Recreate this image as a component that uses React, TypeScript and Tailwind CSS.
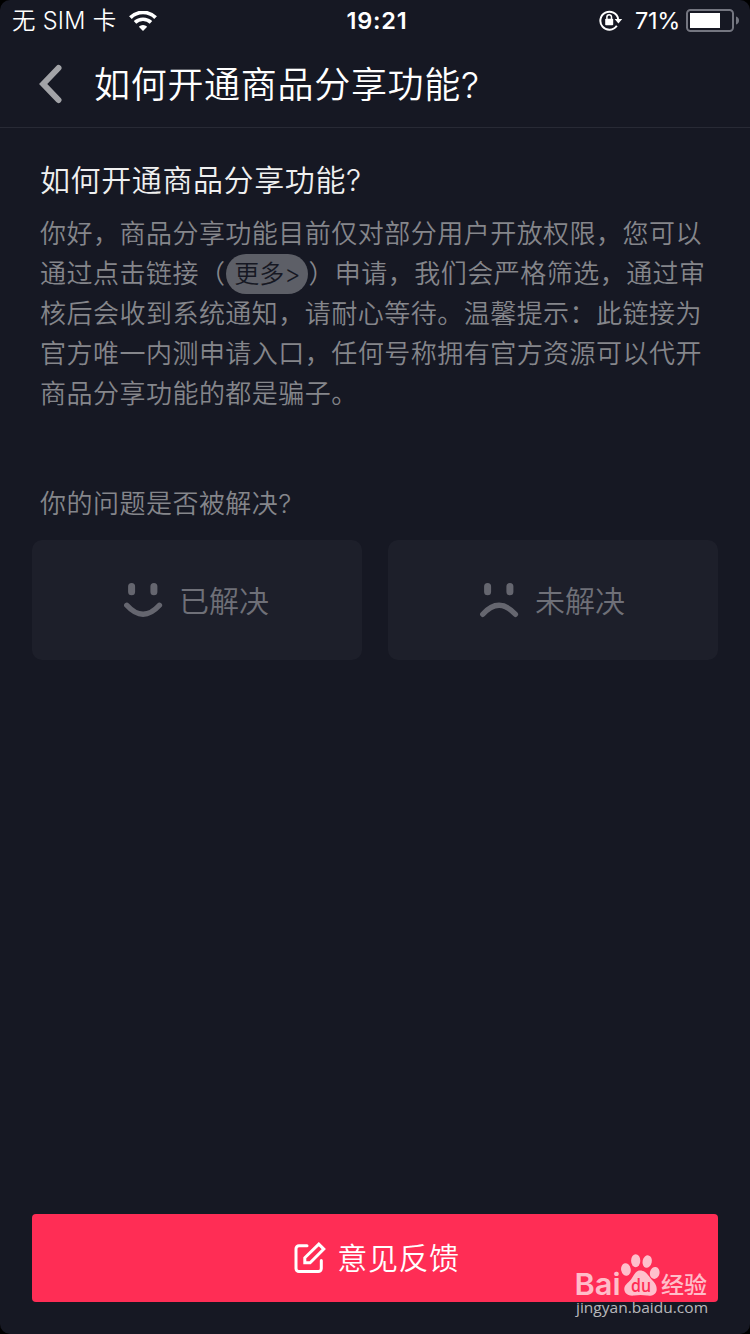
import type { ReactNode } from "react";

function WifiIcon() {
  return (
    <svg width="28" height="20" viewBox="0 0 28 20" fill="none" stroke="#fff">
      <path d="M1.4 6.6A18 18 0 0 1 26.6 6.6" strokeWidth="3.8" />
      <path d="M6 11.4A11.6 11.6 0 0 1 22 11.4" strokeWidth="3.6" />
      <path d="M14 20L9.8 15.7A6 6 0 0 1 18.2 15.7Z" fill="#fff" stroke="none" />
    </svg>
  );
}

function RotationLockIcon() {
  return (
    <svg width="24" height="22" viewBox="0 0 24 22" fill="none" stroke="#fff">
      <path d="M17.8 15.800A9 9 0 1 1 19.2 9" strokeWidth="2" />
      <path d="M15.6 9H23.2L19.4 13.6Z" fill="#fff" stroke="none" />
      <rect x="6.2" y="8.800" width="8" height="6.4" rx="0.8" fill="#fff" stroke="none" />
      <path d="M7.9 9.500V7a2.300 2.300 0 0 1 4.600 0V9.500" strokeWidth="1.500" />
    </svg>
  );
}

function BatteryIcon() {
  return (
    <svg width="54" height="24" viewBox="0 0 54 24" fill="none">
      <rect x="1" y="1" width="46" height="21" rx="3.5" stroke="#747680" strokeWidth="2" />
      <rect x="4" y="4" width="30" height="15" fill="#fff" />
      <path d="M50 7.5c1.8.6 3 2 3 4s-1.200 3.400-3 4z" fill="#747680" />
    </svg>
  );
}

function StatusBar() {
  return (
    <div className="flex h-[41px] items-center text-[23.500px] text-white">
      <div className="flex w-[250px] items-center pl-3">
        <span className="w-[117px] whitespace-nowrap font-[350] tracking-[0.3px]">无 SIM 卡</span>
        <WifiIcon />
      </div>
      <div className="flex-1 pl-1 text-center font-semibold tracking-[0.8px]">19:21</div>
      <div className="flex w-[250px] items-center justify-end pr-[10px]">
        <RotationLockIcon />
        <span className="ml-3 mr-[6px] tracking-[-0.3px]">71%</span>
        <BatteryIcon />
      </div>
    </div>
  );
}

function Face({ happy }: { happy: boolean }) {
  return (
    <svg width="40" height="36" viewBox="0 0 40 36" fill="none" stroke="#65666f" strokeLinecap="round">
      <path d="M7.600 4.500v5.300M29.900 4.500v5.300" strokeWidth="7" />
      <path
        d={happy ? "M2.800 23.300Q19 41.300 35.400 23.300" : "M2.800 32.300Q19 14.300 35.400 32.300"}
        strokeWidth="5.400"
      />
    </svg>
  );
}

function AnswerButton({ icon, label }: { icon: ReactNode; label: string }) {
  return (
    <button
      type="button"
      className="flex h-[120px] w-[330px] items-center justify-center rounded-[10px] bg-[#1d1f2a] text-[30px] font-[350] text-[#6f7078]"
    >
      {icon}
      <span className="ml-[15px] mr-px pt-0.5">{label}</span>
    </button>
  );
}

function EditIcon() {
  return (
    <svg
      width="34"
      height="32"
      viewBox="0 0 34 32"
      fill="none"
      stroke="#fff"
      strokeWidth="3"
      strokeLinecap="round"
      strokeLinejoin="round"
    >
      <path d="M14 3.800H6a3 3 0 0 0-3 3v19.700a3 3 0 0 0 3 3H25.300a3 3 0 0 0 3-3V18.500" />
      <path d="M25.800 2.100L30.800 7.100L17.100 20.800H11.800V15.800Z" strokeLinejoin="miter" />
    </svg>
  );
}

function Watermark() {
  return (
    <div className="absolute left-[574px] top-[1252px] text-white/70">
      <svg
        width="138"
        height="66"
        viewBox="0 0 138 66"
        fill="currentColor"
        className="font-['Open_Sans','Noto_Sans_CJK_SC',sans-serif]"
      >
        <text
          x="0.500"
          y="43"
          fontSize="30"
          fontWeight="600"
          textLength="46"
          lengthAdjust="spacingAndGlyphs"
          className="font-['Inter']"
        >
          Bai
        </text>
        <ellipse cx="52" cy="17.500" rx="4.800" ry="6.300" transform="rotate(-10 52 18)" />
        <ellipse cx="61.700" cy="8.700" rx="4.600" ry="6.500" />
        <ellipse cx="73.300" cy="9.500" rx="4.600" ry="6.300" transform="rotate(12 73 9)" />
        <ellipse cx="80.700" cy="21" rx="4.800" ry="6" transform="rotate(12 81 21)" />
        <path d="M66 18.500c6 0 8 5 12 9.500 3 3 5 5.500 4.700 10-.5 4.500-4.700 6.300-9.700 5.600-4-.7-9-.7-13 0-5 .7-9.200-1.600-9.700-6.100-.3-4.500 3.700-6.500 6.700-10 3-3.500 4-9 9-9z" />
        <text x="57" y="40" fontSize="18" fontWeight="600" fill="#ff2d55" textLength="20" lengthAdjust="spacingAndGlyphs">
          du
        </text>
        <text x="87" y="41" fontSize="23" fontWeight="500" textLength="46" lengthAdjust="spacingAndGlyphs">
          经验
        </text>
        <text x="2" y="61" fontSize="14.500" fontWeight="500" textLength="132" lengthAdjust="spacingAndGlyphs">
          jingyan.baidu.com
        </text>
      </svg>
    </div>
  );
}

export default function App() {
  return (
    <div className="bg-black">
      <div
        lang="zh-CN"
        className="relative flex h-[1334px] w-[750px] flex-col overflow-hidden rounded-[10px] bg-[#161823] font-['Inter','Noto_Sans_CJK_SC',sans-serif]"
      >
        <StatusBar />

        <header className="flex h-[87px] items-center border-b border-[#282a35] pl-[38px]">
          <svg width="26" height="40" viewBox="0 0 26 40" fill="none" stroke="#a2a3a7" strokeWidth="6" strokeLinecap="round">
            <path d="M20.500 4L5.200 20L20.500 36" />
          </svg>
          <h1 className="ml-[30px] pt-0.5 text-[36px] font-[350] leading-[54px] tracking-[0.7px] text-white">
            如何开通商品分享功能?
          </h1>
        </header>

        <main className="flex-1 px-8">
          <section className="px-2 pt-8">
            <h2 className="text-[30px] font-[350] leading-10 tracking-[0.6px] text-[#f0f0f0]">
              如何开通商品分享功能?
            </h2>
            <p className="mt-[14px] text-[26px] font-[350] leading-10 tracking-[0.48px] text-[#85868b]">
              你好，商品分享功能目前仅对部分用户开放权限，您可以通过点击链接（
              <span className="ml-px inline-block h-10 w-[82px] rounded-full bg-[#5d5f67] text-center align-top text-[25px] tracking-normal text-[#161823]">
                更多&gt;
              </span>
              ）申请，我们会严格筛选，通过审核后会收到系统通知，请耐心等待。温馨提示：此链接为官方唯一内测申请入口，任何号称拥有官方资源可以代开商品分享功能的都是骗子。
            </p>
            <p className="mt-[70px] text-[26px] font-[350] leading-10 tracking-[0.48px] text-[#85868b]">
              你的问题是否被解决?
            </p>
          </section>
          <div className="mt-4 flex justify-between">
            <AnswerButton icon={<Face happy />} label="已解决" />
            <AnswerButton icon={<Face happy={false} />} label="未解决" />
          </div>
        </main>

        <footer className="px-8 pb-8">
          <button
            type="button"
            className="flex h-[88px] w-full items-center justify-center rounded-[4px] bg-[#ff2d55] pl-[3px] text-[30px] font-[350] tracking-[0.6px] text-white"
          >
            <EditIcon />
            <span className="ml-[10px]">意见反馈</span>
          </button>
        </footer>

        <Watermark />
      </div>
    </div>
  );
}
